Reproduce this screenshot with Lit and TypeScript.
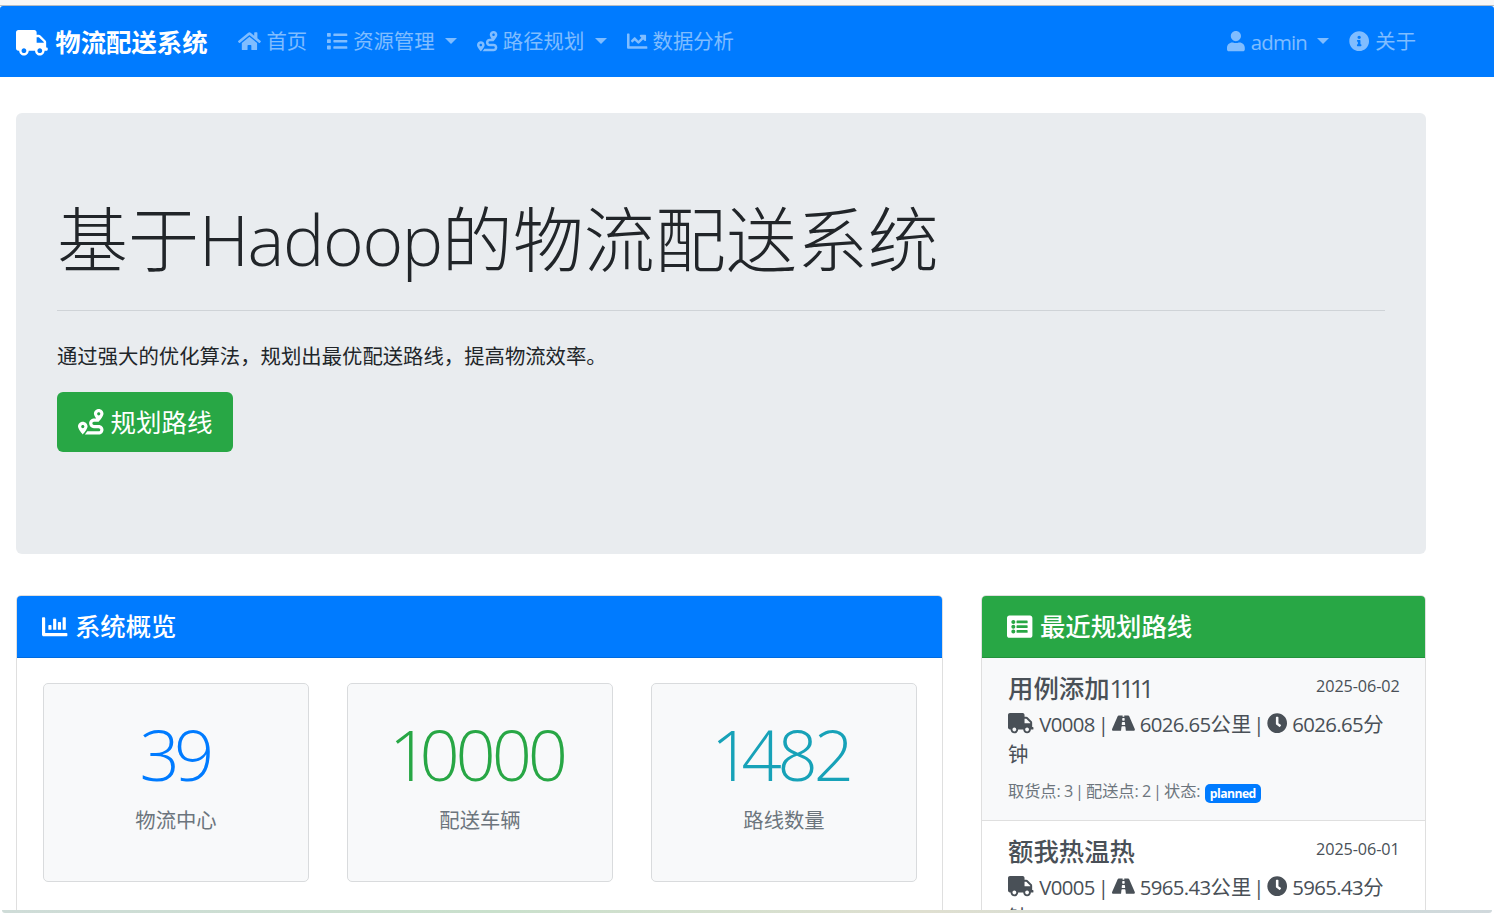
import { LitElement, html, css, svg } from "lit";
import { customElement, property } from "lit/decorators.js";

const ICONS: Record<string, [number, string]> = {
  truck: [640, "M624 352h-16V243.9c0-12.7-5.1-24.9-14.1-33.9L494 110.1c-9-9-21.2-14.1-33.9-14.1H416V48c0-26.5-21.5-48-48-48H48C21.5 0 0 21.5 0 48v320c0 26.5 21.5 48 48 48h16c0 53 43 96 96 96s96-43 96-96h128c0 53 43 96 96 96s96-43 96-96h48c8.8 0 16-7.2 16-16v-32c0-8.8-7.2-16-16-16zM160 464c-26.5 0-48-21.5-48-48s21.5-48 48-48 48 21.5 48 48-21.5 48-48 48zm320 0c-26.5 0-48-21.5-48-48s21.5-48 48-48 48 21.5 48 48-21.5 48-48 48zm80-208H416V144h44.1l99.9 99.9V256z"],
  home: [576, "M280.37 148.26L96 300.11V464a16 16 0 0 0 16 16l112.06-.29a16 16 0 0 0 15.92-16V368a16 16 0 0 1 16-16h64a16 16 0 0 1 16 16v95.64a16 16 0 0 0 16 16.05L464 480a16 16 0 0 0 16-16V300L295.67 148.26a12.19 12.19 0 0 0-15.3 0zM571.6 251.47L488 182.56V44.05a12 12 0 0 0-12-12h-56a12 12 0 0 0-12 12v72.61L318.47 43a48 48 0 0 0-61 0L4.34 251.47a12 12 0 0 0-1.6 16.9l25.5 31A12 12 0 0 0 45.15 301l235.22-193.74a12.19 12.19 0 0 1 15.3 0L530.9 301a12 12 0 0 0 16.9-1.6l25.5-31a12 12 0 0 0-1.7-16.93z"],
  list: [512, "M80 368H16a16 16 0 0 0-16 16v64a16 16 0 0 0 16 16h64a16 16 0 0 0 16-16v-64a16 16 0 0 0-16-16zm0-320H16A16 16 0 0 0 0 64v64a16 16 0 0 0 16 16h64a16 16 0 0 0 16-16V64a16 16 0 0 0-16-16zm0 160H16a16 16 0 0 0-16 16v64a16 16 0 0 0 16 16h64a16 16 0 0 0 16-16v-64a16 16 0 0 0-16-16zm416 176H176a16 16 0 0 0-16 16v32a16 16 0 0 0 16 16h320a16 16 0 0 0 16-16v-32a16 16 0 0 0-16-16zm0-320H176a16 16 0 0 0-16 16v32a16 16 0 0 0 16 16h320a16 16 0 0 0 16-16V80a16 16 0 0 0-16-16zm0 160H176a16 16 0 0 0-16 16v32a16 16 0 0 0 16 16h320a16 16 0 0 0 16-16v-32a16 16 0 0 0-16-16z"],
  route: [512, "M416 320h-96c-17.6 0-32-14.4-32-32s14.4-32 32-32h96s96-107 96-160-43-96-96-96-96 43-96 96c0 25.5 22.2 63.4 45.3 96H320c-52.9 0-96 43.1-96 96s43.1 96 96 96h96c17.6 0 32 14.4 32 32s-14.4 32-32 32H185.5c-16 24.8-33.8 47.7-47.3 64H416c52.9 0 96-43.1 96-96s-43.1-96-96-96zm0-256c17.7 0 32 14.3 32 32s-14.3 32-32 32-32-14.3-32-32 14.3-32 32-32zM96 256c-53 0-96 43-96 96s96 160 96 160 96-107 96-160-43-96-96-96zm0 128c-17.7 0-32-14.3-32-32s14.3-32 32-32 32 14.3 32 32-14.3 32-32 32z"],
  chartLine: [512, "M496 384H64V80c0-8.84-7.16-16-16-16H16C7.16 64 0 71.16 0 80v336c0 17.67 14.33 32 32 32h464c8.84 0 16-7.16 16-16v-32c0-8.84-7.16-16-16-16zM464 96H345.94c-21.38 0-32.09 25.85-16.97 40.97l32.4 32.4L288 242.75l-73.37-73.37c-12.5-12.5-32.76-12.5-45.25 0l-68.69 68.69c-6.25 6.25-6.25 16.38 0 22.63l22.62 22.62c6.25 6.25 16.38 6.25 22.63 0L192 237.25l73.37 73.37c12.5 12.5 32.76 12.5 45.25 0l96-96 32.4 32.4c15.12 15.12 40.97 4.41 40.97-16.97V112c.01-8.84-7.15-16-15.99-16z"],
  chartBar: [512, "M332.8 320h38.4c6.4 0 12.8-6.4 12.8-12.8V172.8c0-6.4-6.4-12.8-12.8-12.8h-38.4c-6.4 0-12.8 6.4-12.8 12.8v134.4c0 6.4 6.4 12.8 12.8 12.8zm96 0h38.4c6.4 0 12.8-6.4 12.8-12.8V76.8c0-6.4-6.4-12.8-12.8-12.8h-38.4c-6.4 0-12.8 6.4-12.8 12.8v230.4c0 6.4 6.4 12.8 12.8 12.8zm-288 0h38.4c6.4 0 12.8-6.4 12.8-12.8v-70.4c0-6.4-6.4-12.8-12.8-12.8h-38.4c-6.4 0-12.8 6.4-12.8 12.8v70.4c0 6.4 6.4 12.8 12.8 12.8zm96 0h38.4c6.4 0 12.8-6.4 12.8-12.8V108.8c0-6.4-6.4-12.8-12.8-12.8h-38.4c-6.4 0-12.8 6.4-12.8 12.8v198.4c0 6.4 6.4 12.8 12.8 12.8zM496 384H64V80c0-8.84-7.16-16-16-16H16C7.16 64 0 71.16 0 80v336c0 17.67 14.33 32 32 32h464c8.84 0 16-7.16 16-16v-32c0-8.84-7.16-16-16-16z"],
  user: [448, "M224 256c70.7 0 128-57.3 128-128S294.7 0 224 0 96 57.3 96 128s57.3 128 128 128zm89.6 32h-16.7c-22.2 10.2-46.9 16-72.9 16s-50.6-5.8-72.9-16h-16.7C60.2 288 0 348.2 0 422.4V464c0 26.5 21.5 48 48 48h352c26.5 0 48-21.5 48-48v-41.6c0-74.2-60.2-134.4-134.4-134.4z"],
  info: [512, "M256 8C119.043 8 8 119.083 8 256c0 136.997 111.043 248 248 248s248-111.003 248-248C504 119.083 392.957 8 256 8zm0 110c23.196 0 42 18.804 42 42s-18.804 42-42 42-42-18.804-42-42 18.804-42 42-42zm56 254c0 6.627-5.373 12-12 12h-88c-6.627 0-12-5.373-12-12v-24c0-6.627 5.373-12 12-12h12v-64h-12c-6.627 0-12-5.373-12-12v-24c0-6.627 5.373-12 12-12h64c6.627 0 12 5.373 12 12v100h12c6.627 0 12 5.373 12 12v24z"],
  listAlt: [512, "M464 480H48c-26.51 0-48-21.49-48-48V80c0-26.51 21.49-48 48-48h416c26.51 0 48 21.49 48 48v352c0 26.51-21.49 48-48 48zM128 120c-22.091 0-40 17.909-40 40s17.909 40 40 40 40-17.909 40-40-17.909-40-40-40zm0 96c-22.091 0-40 17.909-40 40s17.909 40 40 40 40-17.909 40-40-17.909-40-40-40zm0 96c-22.091 0-40 17.909-40 40s17.909 40 40 40 40-17.909 40-40-17.909-40-40-40zm288-136v-32c0-6.627-5.373-12-12-12H204c-6.627 0-12 5.373-12 12v32c0 6.627 5.373 12 12 12h200c6.627 0 12-5.373 12-12zm0 96v-32c0-6.627-5.373-12-12-12H204c-6.627 0-12 5.373-12 12v32c0 6.627 5.373 12 12 12h200c6.627 0 12-5.373 12-12zm0 96v-32c0-6.627-5.373-12-12-12H204c-6.627 0-12 5.373-12 12v32c0 6.627 5.373 12 12 12h200c6.627 0 12-5.373 12-12z"],
  road: [576, "M573.19 402.67l-139.79-320C428.43 71.29 417.6 64 405.68 64h-97.59l2.45 23.16c.5 4.72-3.21 8.84-7.96 8.84h-29.16c-4.75 0-8.46-4.12-7.96-8.84L267.91 64h-97.59c-11.93 0-22.76 7.29-27.73 18.67L2.8 402.67C-6.45 423.86 8.31 448 30.54 448h196.84l10.31-97.68c.86-8.14 7.72-14.32 15.91-14.32h68.8c8.19 0 15.05 6.18 15.91 14.32L348.62 448h196.84c22.23 0 36.99-24.14 27.73-45.33zM260.4 135.16a8 8 0 0 1 7.96-7.16h39.29c4.09 0 7.53 3.09 7.96 7.16l4.6 43.58c.75 7.09-4.81 13.26-11.93 13.26h-40.54c-7.13 0-12.68-6.17-11.93-13.26l4.59-43.58zM315.64 304h-55.29c-9.5 0-16.91-8.23-15.91-17.68l5.07-48c.86-8.14 7.72-14.32 15.91-14.32h45.15c8.19 0 15.05 6.18 15.91 14.32l5.07 48c1 9.45-6.41 17.68-15.91 17.68z"],
  clock: [512, "M256,8C119,8,8,119,8,256S119,504,256,504,504,393,504,256,393,8,256,8Zm92.49,313h0l-20,25a16,16,0,0,1-22.49,2.5h0l-67-49.72a40,40,0,0,1-15-31.23V112a16,16,0,0,1,16-16h32a16,16,0,0,1,16,16V256l58,42.5A16,16,0,0,1,348.49,321Z"],
};

@customElement("fa-icon")
class FaIcon extends LitElement {
  @property() name = "truck";
  static styles = css`
    :host { display: inline-block; height: 1em; line-height: 1; vertical-align: -0.1em; }
    .glyph { display: block; height: 1em; fill: currentColor; overflow: visible; }
  `;
  render() {
    const [w, d] = ICONS[this.name];
    return html`<svg class="glyph" viewBox="0 0 ${w} 512" style="width:${w / 512}em">${svg`<path d=${d}></path>`}</svg>`;
  }
}

interface Route { name: string; suffix: string; date: string; vehicle: string; value: string; }

const ROUTES: Route[] = [
  { name: "用例添加", suffix: "1111", date: "2025-06-02", vehicle: "V0008", value: "6026.65" },
  { name: "额我热温热", suffix: "", date: "2025-06-01", vehicle: "V0005", value: "5965.43" },
];

@customElement("app-root")
class AppRoot extends LitElement {
  static styles = css`
    :host {
      display: block; height: 913px; overflow: hidden; position: relative; background: #fff;
      font-family: "Open Sans", "Noto Sans CJK SC", sans-serif;
      font-size: 20.35px; line-height: 30.5px; color: #212529;
    }
    * { box-sizing: border-box; }
    h1, h4, h5, p { margin: 0; }
    .frame { height: 6px; background: #f7f7f7; border-bottom: 1px solid #b5bcc4; }
    .nav {
      height: 71px; background: #007bff; padding: 0 68px 0 16px; border-radius: 3px 3px 0 0;
      display: flex; align-items: center; white-space: nowrap; color: rgba(255, 255, 255, .5);
    }
    .brand { display: flex; align-items: center; gap: 7.5px; width: 212px; padding-top: 2px; color: #fff; font-size: 25.4px; font-weight: 700; }
    .link { display: flex; align-items: center; gap: 5.6px; padding: 0 10px; }
    .spacer { flex: 1; }
    .caret { margin: -1px 0 0 4.8px; border: 6px solid transparent; border-top-color: currentColor; border-bottom: 0; }
    .admin { letter-spacing: -.04em; padding-top: 1px; }
    .lat { letter-spacing: -.03em; }
    .bar { margin: 0 -1.6px; letter-spacing: -.03em; }
    .bar.tight { margin: 0 -2px 0 -3.2px; }
    .gap { margin-right: 1px; }
    .one { letter-spacing: -.175em; }
    .hero { margin: 36px 68px 0 16px; height: 441px; padding: 81px 41px 0; border-radius: 6px; background: #e9ecef; }
    .title { height: 85px; padding-top: 2px; font-size: 71px; line-height: 85px; font-weight: 300; white-space: nowrap; }
    .word { font-size: 69.5px; letter-spacing: -.02em; }
    .rule { height: 1px; margin: 31px 0 30px; background: #cfd3d7; }
    .lead { height: 31px; font-size: 20.36px; }
    .btn {
      display: flex; align-items: center; gap: 7px; margin-top: 20px; width: 176px; height: 60px; padding-left: 21px;
      border-radius: 6px; background: #28a745; color: #fff; font-size: 25.5px; white-space: nowrap;
    }
    .columns { display: grid; grid-template-columns: 927px 445px; gap: 38px; margin: 41px 0 0 16px; }
    .card { height: 400px; border: 1px solid #dfdfdf; border-radius: 5px; overflow: hidden; }
    .head {
      height: 62px; display: flex; align-items: center; gap: 7.5px; padding-left: 25px;
      border-bottom: 1px solid rgba(0, 0, 0, .125); color: #fff; font-size: 25.4px; font-weight: 500;
    }
    .head.blue { background: #007bff; }
    .head.green { background: #28a745; }
    .stats { display: grid; grid-template-columns: repeat(3, 266px); gap: 38px; padding: 25px 26px; }
    .stat { height: 199px; padding-top: 28px; border: 1px solid #d9dbdd; border-radius: 5px; background: #f8f9fa; text-align: center; color: #6c757d; }
    .num { padding-right: 7px; font-size: 70.5px; line-height: 85px; font-weight: 300; letter-spacing: -.058em; margin-bottom: 8px; }
    .num .one { letter-spacing: -.14em; }
    .num.blue { padding-right: 4px; color: #007bff; letter-spacing: -.08em; }
    .num.green { color: #28a745; }
    .num.teal { color: #17a2b8; }
    .item { height: 163px; padding: 15px 25.4px 0 26px; border-bottom: 1px solid #dfdfdf; color: #495057; }
    .item.active { background: #f8f9fa; }
    .row { display: flex; justify-content: space-between; }
    .name { font-size: 25.4px; line-height: 30.5px; font-weight: 500; }
    .date { font-size: 16.2px; line-height: 27px; letter-spacing: -.006em; }
    .info { margin: 5px 0 6px; }
    .meta { font-size: 16.2px; color: #6c757d; }
    .badge {
      display: inline-block; height: 19px; line-height: 19px; margin-left: 1px; padding: 0 5px; border-radius: 5px;
      background: #007bff; color: #fff; font-size: 12.2px; font-weight: 700; letter-spacing: -.045em; vertical-align: -1px;
    }
    .edge { position: absolute; left: 2px; right: 2px; bottom: 0; height: 3px; border-radius: 0 0 8px 8px;
      background: linear-gradient(90deg, #cfdcd8, #c9e0cc 33%, #dfdfd0 62%, #cfdcd8 85%, #d0d8dc); }
  `;

  private stat(lead: string, value: string, label: string, tone: string) {
    return html`<div class="stat"><div class="num ${tone}">${lead ? html`<span class="one">${lead}</span>` : ""}${value}</div><p>${label}</p></div>`;
  }

  private item(r: Route, i: number) {
    return html`<div class="item ${i === 0 ? "active" : ""}">
      <div class="row"><h5 class="name">${r.name}${r.suffix ? html`<span class="one">${r.suffix}</span>` : ""}</h5><span class="date">${r.date}</span></div>
      <p class="info"><fa-icon class="gap" name="truck"></fa-icon><span class="lat"> ${r.vehicle} </span><span class="bar">|</span> <fa-icon name="road"></fa-icon><span class="lat"> ${r.value}</span>公里 <span class="bar tight">|</span> <fa-icon name="clock"></fa-icon><span class="lat"> ${r.value}</span><span>分</span><span>钟</span></p>
      <div class="meta">取货点<span class="lat">: 3 </span><span class="bar">|</span> 配送点<span class="lat">: 2 </span><span class="bar">|</span> 状态<span class="lat">: </span><span class="badge">planned</span></div>
    </div>`;
  }

  render() {
    return html`
      <div class="frame"></div>
      <nav class="nav">
        <div class="brand"><fa-icon name="truck"></fa-icon>物流配送系统</div>
        <div class="link"><fa-icon name="home"></fa-icon>首页</div>
        <div class="link"><fa-icon name="list"></fa-icon>资源管理<span class="caret"></span></div>
        <div class="link"><fa-icon name="route"></fa-icon>路径规划<span class="caret"></span></div>
        <div class="link"><fa-icon name="chartLine"></fa-icon>数据分析</div>
        <div class="spacer"></div>
        <div class="link"><fa-icon name="user"></fa-icon><span class="admin">admin</span><span class="caret"></span></div>
        <div class="link"><fa-icon name="info"></fa-icon>关于</div>
      </nav>
      <section class="hero">
        <h1 class="title">基于<span class="word">Hadoop</span>的物流配送系统</h1>
        <div class="rule"></div>
        <p class="lead">通过强大的优化算法，规划出最优配送路线，提高物流效率。</p>
        <div class="btn"><fa-icon name="route"></fa-icon>规划路线</div>
      </section>
      <div class="columns">
        <section class="card">
          <h4 class="head blue"><fa-icon name="chartBar"></fa-icon>系统概览</h4>
          <div class="stats">
            ${this.stat("", "39", "物流中心", "blue")}
            ${this.stat("1", "0000", "配送车辆", "green")}
            ${this.stat("1", "482", "路线数量", "teal")}
          </div>
        </section>
        <section class="card">
          <h4 class="head green"><fa-icon name="listAlt"></fa-icon>最近规划路线</h4>
          ${ROUTES.map((r, i) => this.item(r, i))}
        </section>
      </div>
      <div class="edge"></div>
    `;
  }
}
